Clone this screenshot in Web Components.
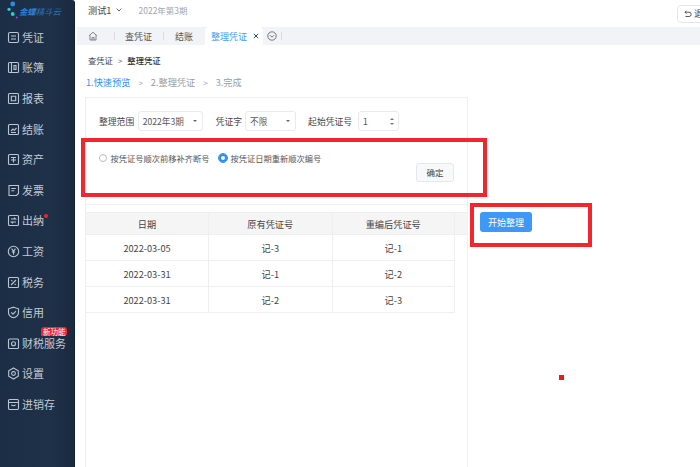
<!DOCTYPE html>
<html lang="zh"><head><meta charset="utf-8"><title>整理凭证</title>
<style>
html,body{margin:0;height:100%;overflow:hidden;background:#fff}
body{font-family:"Noto Sans CJK SC","Noto Sans",sans-serif;color:#333}
</style></head><body>
<app-shell>
  <side-nav slot="nav">
    <nav-item label="凭证" icon="voucher"></nav-item>
    <nav-item label="账簿" icon="book"></nav-item>
    <nav-item label="报表" icon="report"></nav-item>
    <nav-item label="结账" icon="close"></nav-item>
    <nav-item label="资产" icon="asset"></nav-item>
    <nav-item label="发票" icon="invoice"></nav-item>
    <nav-item label="出纳" icon="cash" dot></nav-item>
    <nav-item label="工资" icon="pay"></nav-item>
    <nav-item label="税务" icon="tax"></nav-item>
    <nav-item label="信用" icon="credit"></nav-item>
    <nav-item label="财税服务" icon="service" badge="新功能"></nav-item>
    <nav-item label="设置" icon="gear"></nav-item>
    <nav-item label="进销存" icon="stock"></nav-item>
  </side-nav>
  <top-bar slot="top"></top-bar>
  <tab-strip slot="top"></tab-strip>
  <page-head slot="main"></page-head>
  <work-area slot="main">
    <filter-card></filter-card>
    <preview-table></preview-table>
    <button-primary slot="aside">开始整理</button-primary>
  </work-area>
  <red-marks slot="main"></red-marks>
</app-shell>
<script>
function def(name, css, html, init){
  customElements.define(name, class extends HTMLElement{
    constructor(){super();const s=this.attachShadow({mode:"open"});
      s.innerHTML="<style>"+css+"</style>"+(typeof html==="function"?html(this):html);}
    connectedCallback(){ if(init) init.call(this,this.shadowRoot); }
  });
}
const icons={
 voucher:'<rect x="1.5" y="1.5" width="10" height="10" rx="1.5"/><path d="M4 5h5M4 8h5"/>',
 book:'<rect x="1.5" y="1.5" width="10" height="10" rx="1"/><path d="M4.5 1.5v10M7 4.5h2v4H7z"/>',
 report:'<rect x="1.5" y="1.5" width="10" height="10" rx="1"/><path d="M4.3 4.3h4.4v4.4H4.3z"/>',
 close:'<rect x="1.5" y="1.5" width="10" height="10" rx="1"/><path d="M4 8l2-2 1.3 1.3L9.5 5M4 9.5h5"/>',
 asset:'<rect x="1.5" y="1.5" width="10" height="10" rx="1"/><path d="M4 4.5h5M6.5 4.5v5M4 7h5"/>',
 invoice:'<path d="M2 1.5h9.5v8l-2 2H2z"/><path d="M4.3 4.5h4.5M4.3 6.8h3"/>',
 cash:'<rect x="1.5" y="1.5" width="10" height="10" rx="1"/><path d="M4 5h4.5L7 3.8M9 8H4.5L6 9.2"/>',
 pay:'<circle cx="6.5" cy="6.5" r="5.2"/><path d="M4.6 3.6l1.9 2.6 1.9-2.6M6.5 6.2v3.6M4.8 7h3.4"/>',
 tax:'<rect x="1.5" y="1.5" width="10" height="10" rx="1"/><path d="M4 9l5-5M4.2 4.6h1.2M7.6 8.4h1.2"/>',
 credit:'<path d="M6.5 1.2l5 1.6v3.6c0 2.8-2.2 4.5-5 5.4-2.8-.9-5-2.6-5-5.4V2.8z"/><path d="M4.2 6.3l1.8 1.8 3-3"/>',
 service:'<rect x="1.5" y="2" width="10" height="9.5" rx="1"/><circle cx="6.5" cy="6.7" r="2"/>',
 gear:'<path d="M6.5 1l4.8 2.7v5.6L6.5 12 1.7 9.3V3.7z"/><circle cx="6.5" cy="6.5" r="1.9"/>',
 stock:'<rect x="1.5" y="1.5" width="10" height="10" rx="1.2"/><path d="M1.5 4.5h10M4.5 6.8c.6 1.2 3.4 1.2 4 0"/>'
};

def("app-shell",`:host{display:grid;grid-template-columns:75px 1fr;height:467px;width:700px;overflow:hidden}
 .side{display:flex;min-height:0}.right{display:flex;flex-direction:column;min-width:0;position:relative}
 .main{position:relative;flex:1;display:flex;flex-direction:column;min-height:0}`,
 `<div class="side"><slot name="nav"></slot></div><div class="right"><slot name="top"></slot><div class="main"><slot name="main"></slot></div></div>`);

def("side-nav",`:host{display:block;width:75px;height:467px;box-sizing:border-box;background:linear-gradient(90deg,#1b2e45,#1e3148 70%,#1a2a40);border-right:1.5px solid #141f33;border-top-right-radius:3px}
 .logo{display:flex;align-items:center;height:21px;padding-left:7px;margin-bottom:1px}
 .brand{font-size:8.4px;font-style:italic;color:#2f7fd0;white-space:nowrap;font-weight:700}
 .brand span{font-weight:400;color:#2c74b8}
 svg{flex:none}
 .list{display:flex;flex-direction:column}`,
 `<div class="logo"><svg width="12" height="21" viewBox="0 0 12 21"><circle cx="5.7" cy="4" r="2.4" fill="#2b8fe8"/><circle cx="2" cy="9.3" r="1.6" fill="#18d3e0"/><circle cx="5.7" cy="14" r="1.9" fill="#16d6d6"/><circle cx="9.7" cy="17.5" r="1" fill="#7b5be0"/></svg><span class="brand">金蝶<span>精斗云</span></span></div><div class="list"><slot></slot></div>`);

def("nav-item",`:host{display:flex;align-items:center;height:30.6px;padding-left:7px;gap:2px;position:relative;color:#c3cad3;font-size:11px;white-space:nowrap}
 svg{width:13px;height:13px;fill:none;stroke:#b9c7d4;stroke-width:1.1;flex:none}
 .label{line-height:1}
 .dot{position:absolute;left:44px;top:8px;width:4px;height:4px;border-radius:50%;background:#f5222d}
 .badge{position:absolute;left:41px;top:-1px;height:9.5px;line-height:9.5px;font-size:7.5px;padding:0 1px 0 2px;background:#f0222e;color:#fff;border-radius:3px 3px 3px 0}`,
 el=>`<svg viewBox="0 0 13 13">${icons[el.getAttribute("icon")]||""}</svg><span class="label">${el.getAttribute("label")}</span>${el.hasAttribute("dot")?'<i class="dot"></i>':""}${el.getAttribute("badge")?`<span class="badge">${el.getAttribute("badge")}</span>`:""}`);

def("top-bar",`:host{display:flex;align-items:center;height:27px;box-sizing:border-box;padding:0 0 7px 13px;font-size:9.2px;color:#444;position:relative;overflow:hidden}
 svg{margin:0 0 0 5px}.period{margin-left:16px;font-size:8.5px;color:#a3a6ab}
 .back{margin-left:auto;margin-right:-13px;height:18px;width:36px;box-sizing:border-box;border:1px solid #e4e6ea;border-radius:4px;display:flex;align-items:center;padding-left:6px;gap:2px;font-size:9px;color:#444;margin-top:7px}`,
 `<span>测试1</span><svg width="6" height="4" viewBox="0 0 6 4"><path d="M.6.6L3 3l2.4-2.4" fill="none" stroke="#555" stroke-width=".9"/></svg><span class="period">2022年第3期</span><span class="back"><svg style="margin:0" width="8" height="8" viewBox="0 0 8 8"><path d="M1 2.2h4a2 2 0 010 4.3H1.5M2.4 .8L1 2.2l1.4 1.4" fill="none" stroke="#445" stroke-width=".9"/></svg>退出</span>`);

def("tab-strip",`:host{display:flex;align-items:stretch;height:18px;margin-left:2px;background:#f1f3f6;font-size:9px;color:#555}
 .t{display:flex;align-items:center}.sep{width:1px;height:8px;background:#d9dce0;align-self:center}
 .home{width:37px;justify-content:flex-start;padding-left:11px;box-sizing:border-box}
 .active{background:#fff;color:#3f9cf5;width:58px;margin-left:12px;border-radius:4px 4px 0 0;padding-left:6px;box-sizing:border-box;gap:3px}
 .active svg{margin-left:3px}.more{margin:0 4px 0 4px}`,
 `<span class="t home"><svg width="10" height="10" viewBox="0 0 10 10"><path d="M1 4.8L5 1.2l4 3.6M2 4.2V9h6V4.2M4 9V6.5h2V9" fill="none" stroke="#778" stroke-width=".9"/></svg></span><span class="sep"></span><span class="t" style="margin-left:10px">查凭证</span><span class="sep" style="margin-left:11px"></span><span class="t" style="margin-left:11px">结账</span><span class="t active">整理凭证<svg width="6" height="6" viewBox="0 0 6 6"><path d="M.8.8l4.4 4.4M5.2.8L.8 5.2" stroke="#445" fill="none"/></svg></span><span class="t more"><svg width="10" height="10" viewBox="0 0 10 10"><circle cx="5" cy="5" r="4.2" fill="none" stroke="#667" stroke-width=".9"/><path d="M3 4.2l2 2 2-2" fill="none" stroke="#667" stroke-width=".9"/></svg></span><span class="sep"></span>`);

def("page-head",`:host{display:block;padding:0 0 0 11px;font-size:8.3px;color:#444}
 .crumb{display:flex;align-items:center;gap:5px;height:14px;margin:8px 0 0 2px;color:#444}
 .crumb b{font-weight:500;color:#333}.gt{font-size:8px;color:#666}
 .steps{display:flex;align-items:center;height:14px;margin-top:8px;font-size:9.2px;color:#9a9da2}
 .on{color:#2f93f5}.a{margin:0 8px;font-size:8px}`,
 `<div class="crumb"><span>查凭证</span><span class="gt">&gt;</span><b>整理凭证</b></div><div class="steps"><span class="on">1.快速预览</span><span class="a">&gt;</span><span>2.整理凭证</span><span class="a">&gt;</span><span>3.完成</span></div>`);

def("work-area",`:host{display:flex;flex:1;margin:8px 0 0 10px;min-height:0}
 .panel{width:383px;box-sizing:border-box;border-left:1.5px solid #eeeff2;border-right:1.5px solid #eeeff2;border-top:1.5px solid #eeeff2;display:flex;flex-direction:column;gap:7px;flex:none}
 .aside{display:flex;align-items:flex-start;margin:115px 0 0 12px}`,
 `<div class="panel"><slot></slot></div><div class="aside"><slot name="aside"></slot></div>`);

def("filter-card",`:host{display:block;height:107px;box-sizing:border-box;border-bottom:1.5px solid #eeeff2;font-size:8.8px;color:#444;position:relative}
 .row{display:flex;align-items:center;padding:12.5px 0 0 13px;height:21px}
 .box{height:20.5px;box-sizing:border-box;border:1px solid #e8eaed;border-radius:3px;display:flex;align-items:center;padding:0 4px;font-size:8.6px;color:#555;margin-left:3.5px}
 .caret{margin-left:auto;width:0;height:0;border:2px solid transparent;border-top:2.5px solid #666;border-bottom:0;margin-right:1px}
 .radios{display:flex;align-items:center;margin:20px 0 0 12.5px;font-size:8.25px;color:#555;height:12px}
 .r{width:8px;height:8px;border-radius:50%;box-sizing:border-box;border:1px solid #b8bcc4;margin-right:4px;flex:none}
 .r.on{border:2.6px solid #2f8cf0;background:#fff;outline:.6px solid #2f8cf0;outline-offset:0}
 .foot{display:flex;justify-content:flex-end;padding:0 13px 0 0;margin-top:-1px}
 .ok{width:38px;height:19px;border:1px solid #e4e7ec;border-radius:3px;background:#f8f9fb;display:flex;align-items:center;justify-content:center;font-size:8.5px;color:#444;box-sizing:border-box}
 .spin{margin-left:auto;display:flex;flex-direction:column;gap:3px}
 .spin i{display:block;width:0;height:0;border:2px solid transparent}
 .spin i:first-child{border-bottom:2.5px solid #777;border-top:0}.spin i:last-child{border-top:2.5px solid #777;border-bottom:0}`,
 `<div class="row"><span>整理范围</span><span class="box" style="width:65px">2022年3期<i class="caret"></i></span><span style="margin-left:13px">凭证字</span><span class="box" style="width:51px;margin-left:3px">不限<i class="caret"></i></span><span style="margin-left:12px">起始凭证号</span><span class="box" style="width:41px;margin-left:6px">1<span class="spin"><i></i><i></i></span></span></div>
 <div class="radios"><i class="r"></i><span>按凭证号顺次前移补齐断号</span><i class="r on" style="margin-left:9px"></i><span>按凭证日期重新顺次编号</span></div>
 <div class="foot"><span class="ok">确定</span></div>`);

def("preview-table",`:host{display:block;font-size:9px;color:#444}
 .g{display:grid;grid-template-columns:123px 123.5px 122.5px 1fr}
 .c{display:flex;align-items:center;justify-content:center;height:26px;box-sizing:border-box;border-bottom:1.5px solid #eeeff2;border-right:1.5px solid #eeeff2;font-size:9.2px}
 .h{background:#f5f5f6;height:23px;border-top:1.5px solid #eeeff2}
 .x{border:0;height:26px}.h.x{border-top:1.5px solid #eeeff2;border-bottom:1.5px solid #eeeff2;height:23px}`,
 `<div class="g"><div class="c h">日期</div><div class="c h">原有凭证号</div><div class="c h">重编后凭证号</div><div class="c h x"></div>
 <div class="c">2022-03-05</div><div class="c">记-3</div><div class="c">记-1</div><div class="c x"></div>
 <div class="c">2022-03-31</div><div class="c">记-1</div><div class="c">记-2</div><div class="c x"></div>
 <div class="c">2022-03-31</div><div class="c">记-2</div><div class="c">记-3</div><div class="c x"></div></div>`);

def("button-primary",`:host{display:flex;align-items:center;justify-content:center;width:52px;height:20px;border-radius:3px;background:#3d98f7;color:#fff;font-size:9px}`,`<slot></slot>`);

def("red-marks",`:host{position:absolute;inset:0;pointer-events:none;display:block}
 i{position:absolute;display:block;box-sizing:border-box}
 .b{border:4px solid #f4262d}`,
 `<i class="b" style="left:6px;top:93px;width:406px;height:59px"></i><i class="b" style="left:395px;top:158px;width:122px;height:44px"></i><i style="left:484px;top:330px;width:5px;height:5px;background:#f4161f"></i>`);
</script>
</body></html>
